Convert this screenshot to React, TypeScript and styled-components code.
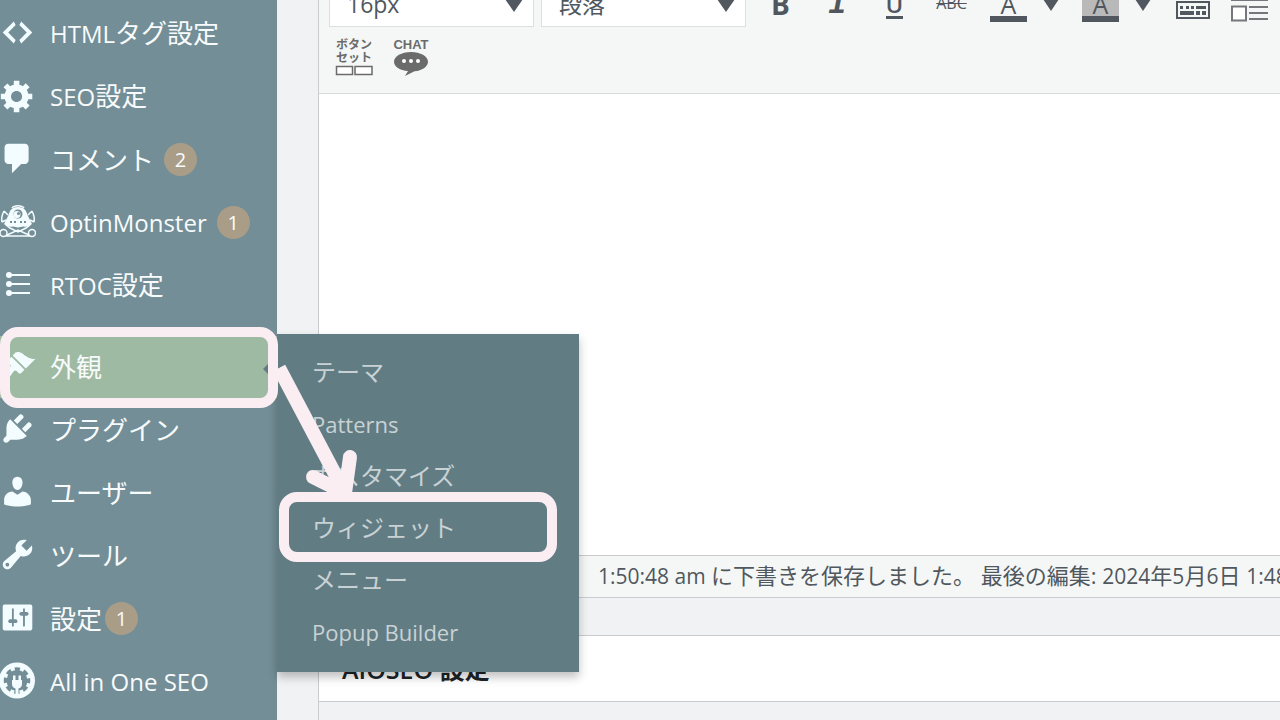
import React from "react";
import styled, { createGlobalStyle, css } from "styled-components";

const color = {
  sidebar: "#738e96",
  submenu: "#627c83",
  current: "#9fbaa2",
  badge: "#aa9d88",
  menuText: "#f8fbfc",
  menuIcon: "#f3fcff",
  subText: "#c8d2d5",
  page: "#f1f2f4",
  tool: "#f5f7f6",
  line: "#c9cbce",
  ink: "#50575e",
  mark: "#faeef2",
};

const GlobalStyle = createGlobalStyle`
  *, *::before, *::after { box-sizing: border-box; }
  body {
    margin: 0;
    background: ${color.page};
    font-family: "Open Sans", "Noto Sans CJK JP", sans-serif;
  }
  button, select, textarea { font: inherit; }
`;

const Page = styled.div`
  display: flex;
  min-height: 100vh;
  overflow: hidden;
`;

/* ---------- Admin menu ---------- */

const Sidebar = styled.nav`
  flex: 0 0 277px;
  padding-top: 2px;
  background: ${color.sidebar};
  position: relative;
  z-index: 1;
`;

const MenuList = styled.ul`
  list-style: none;
  margin: 0;
  padding: 0;
`;

const MenuLink = styled.a`
  display: flex;
  align-items: center;
  height: 63px;
  color: ${color.menuText};
  font-size: 26px;
  line-height: 36px;
  text-decoration: none;
  white-space: nowrap;
`;

const MenuItem = styled.li<{ $current?: boolean }>`
  ${(p) =>
    p.$current &&
    css`
      position: relative;
      margin-top: 19px;
      background: ${color.current};

      > ${MenuLink} {
        height: 62px;
      }
    `}
`;

const IconSlot = styled.span`
  display: flex;
  flex: none;
  width: 50px;
  padding-bottom: 2px;
  color: ${color.menuIcon};

  svg {
    width: 37px;
    height: 37px;
    margin-left: -1px;
    fill: currentColor;
  }
`;

const Latin = styled.span`
  font-size: 24px;
`;

const Badge = styled.span<{ $gap: number }>`
  display: flex;
  align-items: center;
  justify-content: center;
  width: 33px;
  height: 33px;
  margin-left: ${(p) => p.$gap}px;
  border-radius: 50%;
  background: ${color.badge};
  font-size: 20px;
  line-height: 24px;
`;

const Notch = styled.span`
  position: absolute;
  right: 0;
  top: 19px;
  border: 14px solid transparent;
  border-left: 0;
  border-right-color: ${color.submenu};
`;

const Submenu = styled.ul`
  position: absolute;
  left: 100%;
  top: -2px;
  width: 302px;
  margin: 0;
  padding: 12px 0 14px;
  list-style: none;
  background: ${color.submenu};
  box-shadow: 0 5px 9px rgba(0, 0, 0, 0.25);
`;

const SubmenuItem = styled.li`
  position: relative;
`;

const SubmenuLink = styled.a`
  display: flex;
  align-items: center;
  height: 52px;
  padding-left: 35px;
  color: ${color.subText};
  font-size: 24px;
  line-height: 32px;
  text-decoration: none;

  ${Latin} {
    font-size: 22px;
  }
`;

const Frame = styled.span<{ $inset: string }>`
  position: absolute;
  inset: ${(p) => p.$inset};
  border: 10px solid ${color.mark};
  border-radius: 18px;
  pointer-events: none;
`;

const Arrow = styled.svg`
  position: absolute;
  left: 270px;
  top: 24px;
  width: 100px;
  height: 150px;
  fill: none;
  stroke: ${color.mark};
  stroke-width: 14;
  pointer-events: none;
`;

/* ---------- Editor ---------- */

const Main = styled.main`
  flex: 1;
  min-width: 0;
  padding-left: 41px;
`;

const Editor = styled.section`
  border-left: 1px solid ${color.line};
  background: #fff;
`;

const Toolbar = styled.div`
  padding-bottom: 14px;
  background: ${color.tool};
  border-bottom: 1px solid #d9dbdc;
`;

const ToolRow = styled.div<{ $clipped?: boolean }>`
  display: flex;
  align-items: flex-end;
  height: ${(p) => (p.$clipped ? 27 : 52)}px;
  padding-left: ${(p) => (p.$clipped ? 10 : 6)}px;
  overflow: hidden;
`;

const SelectBox = styled.label`
  position: relative;
  flex: none;
  width: 205px;
  margin-right: 7px;

  &::after {
    content: "";
    position: absolute;
    right: 11px;
    top: 15px;
    border: 9px solid transparent;
    border-top: 13px solid ${color.ink};
    border-bottom: 0;
  }
`;

const Select = styled.select`
  display: block;
  appearance: none;
  width: 100%;
  height: 43px;
  padding: 0 17px 3px;
  border: 1px solid #dcdfdf;
  border-radius: 0;
  background: #fff;
  color: ${color.ink};
  font-size: 23px;
  line-height: 32px;
`;

const ToolButton = styled.button<{ $narrow?: boolean }>`
  display: flex;
  flex: none;
  align-items: center;
  justify-content: center;
  width: ${(p) => (p.$narrow ? 28 : 57)}px;
  height: 44px;
  margin: 0 ${(p) => (p.$narrow ? 7 : 0)}px 0 0;
  padding: 0;
  border: 0;
  background: none;
  color: ${color.ink};
`;

const Buttons = styled.div`
  display: flex;
  flex: none;
  margin-left: -1px;
`;

const Glyph = styled.span<{ $kind: "bold" | "italic" | "underline" | "strike" }>`
  line-height: 32px;
  ${(p) =>
    p.$kind === "bold" &&
    css`
      padding-bottom: 2px;
      font-size: 28px;
      font-weight: 700;
    `}
  ${(p) =>
    p.$kind === "italic" &&
    css`
      font: italic 700 32px/26px "Liberation Mono", monospace;
    `}
  ${(p) =>
    p.$kind === "underline" &&
    css`
      border-bottom: 3px solid;
      font-size: 24px;
      font-weight: 600;
      line-height: 24px;
    `}
  ${(p) =>
    p.$kind === "strike" &&
    css`
      padding-bottom: 4px;
      font-size: 16px;
      text-decoration: line-through;
    `}
`;

const ColorGlyph = styled.span<{ $filled?: boolean }>`
  width: 37px;
  height: 34px;
  border-bottom: 6px solid ${color.ink};
  background: ${(p) => (p.$filled ? "#b9b9b9" : "transparent")};
  font-size: 25px;
  line-height: 32px;
  text-align: center;
`;

const Caret = styled.span`
  border: 8px solid transparent;
  border-top: 12px solid;
  border-bottom: 0;
`;

const Content = styled.textarea`
  display: block;
  width: 100%;
  height: 461px;
  padding: 16px;
  border: 0;
  outline: 0;
  resize: none;
  background: #fff;
`;

const StatusBar = styled.div`
  padding: 3px 0 5px 279px;
  border-top: 1px solid ${color.line};
  border-bottom: 1px solid ${color.line};
  background: ${color.tool};
  color: ${color.ink};
  font-size: 22px;
  line-height: 32px;
  white-space: nowrap;
  overflow: hidden;

  ${Latin} {
    font-size: 21px;
  }
`;

const MetaBox = styled.section`
  margin-top: 37px;
  border: 1px solid ${color.line};
  border-right: 0;
  background: ${color.page};
`;

const MetaTitle = styled.h2`
  margin: 0;
  padding: 16px 23px 15px;
  border-bottom: 1px solid ${color.line};
  background: #fff;
  color: #1d2327;
  font-size: 25px;
  font-weight: 600;
  line-height: 34px;
`;

const MetaBody = styled.div`
  height: 20px;
`;

/* ---------- Icons ---------- */

const Dash = ({ d }: { d: string }) => (
  <svg viewBox="0 0 20 20" aria-hidden="true">
    <path d={d} />
  </svg>
);

const icons = {
  code: "M9 6l-4 4 4 4-1 2-6-6 6-6zm2 8l4-4-4-4 1-2 6 6-6 6z",
  gear: "M18 12h-2.18c-.17.7-.44 1.35-.81 1.93l1.54 1.54-2.1 2.1-1.54-1.54c-.58.36-1.23.63-1.91.79V19H8v-2.18c-.68-.16-1.33-.43-1.91-.79l-1.54 1.54-2.12-2.12 1.54-1.54c-.36-.58-.63-1.23-.79-1.91H1V9.03h2.17c.16-.7.44-1.35.8-1.94L2.43 5.55l2.1-2.1 1.54 1.54c.58-.37 1.24-.64 1.93-.81V2h3v2.18c.68.16 1.33.43 1.91.79l1.54-1.54 2.12 2.12-1.54 1.54c.36.59.64 1.24.8 1.94H18V12zm-8.5 1.5c1.66 0 3-1.34 3-3s-1.34-3-3-3-3 1.34-3 3 1.34 3 3 3z",
  comment: "M5 2h9c1.1 0 2 .9 2 2v7c0 1.1-.9 2-2 2h-2l-5 5v-5H5c-1.1 0-2-.9-2-2V4c0-1.1.9-2 2-2z",
  brush: "M14.48 11.06L7.41 3.99l1.5-1.5c.5-.56 2.3-.47 3.51.32 1.21.8 1.43 1.28 2.91 2.1 1.18.64 2.45 1.26 4.45.85zm-.71.71L6.7 4.7 4.93 6.47c-.39.39-.39 1.02 0 1.41l1.06 1.06c.39.39.39 1.03 0 1.42-.6.6-1.43 1.11-2.21 1.69-.35.26-.7.53-1.01.84C1.43 14.23.4 16.08 1.4 17.07c.99 1 2.84-.03 4.18-1.36.31-.31.58-.66.85-1.02.57-.78 1.08-1.61 1.69-2.21.39-.39 1.02-.39 1.41 0l1.06 1.06c.39.39 1.02.39 1.41 0z",
  plug: "M13.11 4.36L9.87 7.6 8 5.73l3.24-3.24c.35-.34 1.05-.2 1.56.32.52.51.66 1.21.31 1.55zm-8 1.77l.91-1.12 9.01 9.01-1.19.84c-.71.71-2.63 1.16-3.82 1.16H6.14L4.9 17.26c-.59.59-1.54.59-2.12 0-.59-.58-.59-1.53 0-2.12l1.24-1.24v-3.88c0-1.13.4-3.19 1.09-3.89zm7.26 3.97l3.24-3.24c.34-.35 1.04-.21 1.55.31.52.51.66 1.21.31 1.55l-3.24 3.25z",
  user: "M10 9.25c-2.27 0-2.73-3.44-2.73-3.44C7 4.02 7.82 2 9.97 2c2.16 0 2.98 2.02 2.71 3.81 0 0-.41 3.44-2.68 3.44zm0 2.57L12.72 10c2.39 0 4.52 2.33 4.52 4.53v2.49s-3.65 1.13-7.24 1.13c-3.65 0-7.24-1.13-7.24-1.13v-2.49c0-2.25 1.94-4.48 4.47-4.48z",
  wrench: "M16.68 9.77c-1.34 1.34-3.3 1.67-4.95.99l-5.41 6.52c-.99.99-2.59.99-3.58 0s-.99-2.59 0-3.57l6.52-5.42c-.68-1.65-.35-3.61.99-4.95 1.28-1.28 3.12-1.62 4.72-1.06l-2.89 2.89 2.82 2.82 2.86-2.87c.53 1.58.18 3.39-1.08 4.65zM3.81 16.21c.4.39 1.04.39 1.43 0 .4-.4.4-1.04 0-1.43-.39-.4-1.03-.4-1.43 0-.39.39-.39 1.03 0 1.43z",
  sliders: "M18 16V4c0-.55-.45-1-1-1H3c-.55 0-1 .45-1 1v12c0 .55.45 1 1 1h14c.55 0 1-.45 1-1zM8 11h1c.55 0 1 .45 1 1s-.45 1-1 1H8v1.5c0 .28-.22.5-.5.5s-.5-.22-.5-.5V13H6c-.55 0-1-.45-1-1s.45-1 1-1h1V5.5c0-.28.22-.5.5-.5s.5.22.5.5V11zm5-2h-1c-.55 0-1-.45-1-1s.45-1 1-1h1V5.5c0-.28.22-.5.5-.5s.5.22.5.5V7h1c.55 0 1 .45 1 1s-.45 1-1 1h-1v5.5c0 .28-.22.5-.5.5s-.5-.22-.5-.5V9z",
};

const MonsterIcon = () => (
  <svg viewBox="0 0 37 37" aria-hidden="true">
    <g fill="none" stroke="currentColor" strokeWidth="1.5">
      <path d="M13 5c2-3 10-3 12 0" />
      <path d="M5 8c-2 4-3 7-2 11M33 8c2 4 3 7 2 11M5 8l4 4M33 8l-4 4M3 19l4-2M35 19l-4-2" />
      <path d="M7 22l4 3 8 4 8-4 4-3M8 32l11-5 11 5M7 33h24" />
      <circle cx="4.5" cy="30" r="3.5" />
      <circle cx="33" cy="30" r="3.5" />
    </g>
    <path d="M19 4c-6 0-8 3-9.500 8L5 21c3 3 6 3 9 2.500l5 1 5-1c3 .5 6 .5 9-2.500l-4.500-9C27 7 25 4 19 4z" />
    <circle cx="19" cy="11" r="4.500" fill={color.sidebar} />
    <circle cx="18" cy="11.500" r="3.500" />
    <circle cx="19.500" cy="10.500" r="1.500" fill={color.sidebar} />
    <path d="M11 18h2v2h-2zM15 18h2v2h-2zM21 18h2v2h-2zM25 18h2v2h-2z" fill={color.sidebar} />
  </svg>
);

const ListIcon = () => (
  <svg viewBox="0 0 37 37" aria-hidden="true">
    <circle cx="10" cy="9" r="3" />
    <circle cx="10" cy="18" r="3" />
    <circle cx="10" cy="27" r="3" />
    <path d="M10 9h21M10 18h21M10 27h21" fill="none" stroke="currentColor" strokeWidth="2" />
  </svg>
);

const SeoIcon = () => (
  <svg viewBox="0 0 37 37" aria-hidden="true">
    <circle cx="18" cy="18.500" r="18" />
    <circle cx="18" cy="18.500" r="10.500" fill={color.sidebar} />
    <circle cx="18" cy="18.500" r="11" fill="none" stroke={color.sidebar} strokeWidth="4.500" strokeDasharray="5 3.640" strokeDashoffset="2.500" />
    <path d="M13 18h10v4c0 2.500-1.500 4-3.500 4.500V32h-3v-5.500C14.500 26 13 24.500 13 22zM14 13.500h2.500V18H14zM19.500 13.500H22V18h-2.500z" />
  </svg>
);

const KeyboardIcon = () => (
  <svg width="34" height="44" viewBox="0 0 34 44" fill="none" stroke={color.ink} aria-hidden="true">
    <path d="M1 19h32v16H1z" strokeWidth="2" />
    <path d="M4 24.500h3M10 24.500h3M15 24.500h3M20 24.500h10" strokeWidth="3" />
    <path d="M4 30h14M20 30h4M26 30h4" strokeWidth="4" />
  </svg>
);

const MediaListIcon = () => (
  <svg width="37" height="44" viewBox="0 0 37 44" fill="none" stroke="#75777a" strokeWidth="2" aria-hidden="true">
    <path d="M0 17h37M18 24h19M18 30h19M18 36h19" />
    <path d="M1 23.500h14v14H1z" fill="#fff" />
  </svg>
);

const ButtonSetIcon = () => (
  <svg width="38" height="40" viewBox="0 0 38 40" fill="#6b6b6b" aria-hidden="true">
    <g fontSize="12" fontWeight="700" textAnchor="middle">
      <text x="19" y="12">ボタン</text>
      <text x="19" y="25">セット</text>
    </g>
    <path d="M1.500 29.500h16v8h-16zM20 29.500h17v8H20z" fill="#fff" stroke="#6b6b6b" strokeWidth="1.500" />
  </svg>
);

const ChatIcon = () => (
  <svg width="38" height="40" viewBox="0 0 38 40" fill="#6b6b6b" aria-hidden="true">
    <text x="19" y="12" fontFamily="Liberation Sans, sans-serif" fontSize="13" fontWeight="700" textAnchor="middle">
      CHAT
    </text>
    <path d="M19 15c9.500 0 17 4.300 17 9.700 0 5-6 9-13.500 9.600L13 39l3-5C8 33.500 2 29.700 2 24.700 2 19.300 9.500 15 19 15z" />
    <g fill="#fff">
      <circle cx="12" cy="24" r="2" />
      <circle cx="19" cy="24" r="2" />
      <circle cx="26" cy="24" r="2" />
    </g>
  </svg>
);

/* ---------- Page ---------- */

type Entry = { icon: React.ReactNode; latin?: string; text?: string; count?: number; gap?: number };

const upper: Entry[] = [
  { icon: <Dash d={icons.code} />, latin: "HTML", text: "タグ設定" },
  { icon: <Dash d={icons.gear} />, latin: "SEO", text: "設定" },
  { icon: <Dash d={icons.comment} />, text: "コメント", count: 2, gap: 10 },
  { icon: <MonsterIcon />, latin: "OptinMonster", count: 1, gap: 10 },
  { icon: <ListIcon />, latin: "RTOC", text: "設定" },
];

const lower: Entry[] = [
  { icon: <Dash d={icons.plug} />, text: "プラグイン" },
  { icon: <Dash d={icons.user} />, text: "ユーザー" },
  { icon: <Dash d={icons.wrench} />, text: "ツール" },
  { icon: <Dash d={icons.sliders} />, text: "設定", count: 1, gap: 3 },
  { icon: <SeoIcon />, latin: "All in One SEO" },
];

const MenuEntry = ({ icon, latin, text, count, gap = 0 }: Entry) => (
  <MenuLink href="#">
    <IconSlot>{icon}</IconSlot>
    <span>
      {latin && <Latin>{latin}</Latin>}
      {text}
    </span>
    {count && <Badge $gap={gap}>{count}</Badge>}
  </MenuLink>
);

const submenu: { text: string; latin?: boolean; framed?: boolean }[] = [
  { text: "テーマ" },
  { text: "Patterns", latin: true },
  { text: "カスタマイズ" },
  { text: "ウィジェット", framed: true },
  { text: "メニュー" },
  { text: "Popup Builder", latin: true },
];

export default function App() {
  return (
    <>
      <GlobalStyle />
      <Page>
        <Sidebar>
          <MenuList>
            {upper.map((e, i) => (
              <MenuItem key={i}>
                <MenuEntry {...e} />
              </MenuItem>
            ))}
            <MenuItem $current>
              <MenuEntry icon={<Dash d={icons.brush} />} text="外観" />
              <Notch />
              <Submenu>
                {submenu.map((s) => (
                  <SubmenuItem key={s.text}>
                    <SubmenuLink href="#">{s.latin ? <Latin>{s.text}</Latin> : s.text}</SubmenuLink>
                    {s.framed && <Frame $inset="-10px 22px -8px 2px" />}
                  </SubmenuItem>
                ))}
              </Submenu>
              <Frame $inset="-9px -1px -10px 0" />
              <Arrow viewBox="270 360 100 150" aria-hidden="true">
                <path d="M279 368L345 493" />
                <path d="M313 477L345 493L350 457" strokeLinecap="round" strokeLinejoin="round" />
              </Arrow>
            </MenuItem>
            {lower.map((e, i) => (
              <MenuItem key={i}>
                <MenuEntry {...e} />
              </MenuItem>
            ))}
          </MenuList>
        </Sidebar>

        <Main>
          <Editor>
            <Toolbar>
              <ToolRow $clipped>
                <SelectBox>
                  <Select aria-label="フォントサイズ" defaultValue="16px">
                    <option>16px</option>
                  </Select>
                </SelectBox>
                <SelectBox>
                  <Select aria-label="書式" defaultValue="段落">
                    <option>段落</option>
                  </Select>
                </SelectBox>
                <Buttons>
                  <ToolButton aria-label="太字"><Glyph $kind="bold">B</Glyph></ToolButton>
                  <ToolButton aria-label="イタリック"><Glyph $kind="italic">I</Glyph></ToolButton>
                  <ToolButton aria-label="下線"><Glyph $kind="underline">U</Glyph></ToolButton>
                  <ToolButton aria-label="打ち消し"><Glyph $kind="strike">ABC</Glyph></ToolButton>
                  <ToolButton aria-label="テキスト色"><ColorGlyph>A</ColorGlyph></ToolButton>
                  <ToolButton aria-label="テキスト色を選択" $narrow><Caret /></ToolButton>
                  <ToolButton aria-label="背景色"><ColorGlyph $filled>A</ColorGlyph></ToolButton>
                  <ToolButton aria-label="背景色を選択" $narrow><Caret /></ToolButton>
                  <ToolButton aria-label="キーボード"><KeyboardIcon /></ToolButton>
                  <ToolButton aria-label="リスト"><MediaListIcon /></ToolButton>
                </Buttons>
              </ToolRow>
              <ToolRow>
                <ToolButton aria-label="ボタンセット"><ButtonSetIcon /></ToolButton>
                <ToolButton aria-label="チャット"><ChatIcon /></ToolButton>
              </ToolRow>
            </Toolbar>
            <Content aria-label="本文" />
            <StatusBar>
              <Latin>1:50:48 am </Latin>に下書きを保存しました。 最後の編集: <Latin>2024</Latin>年<Latin>5</Latin>月
              <Latin>6</Latin>日 <Latin>1:48</Latin>
            </StatusBar>
          </Editor>
          <MetaBox>
            <MetaTitle>AIOSEO 設定</MetaTitle>
            <MetaBody />
          </MetaBox>
        </Main>
      </Page>
    </>
  );
}
